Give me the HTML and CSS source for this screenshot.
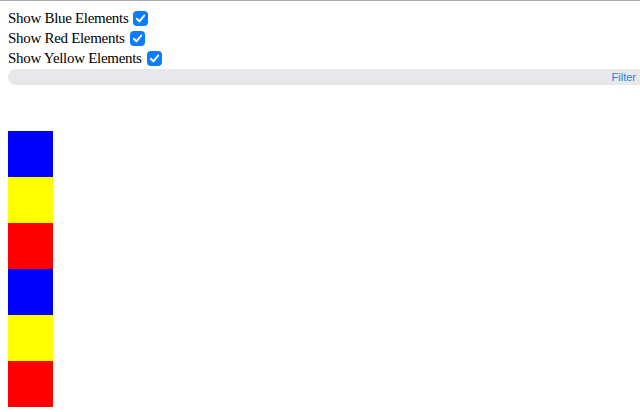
FILE: index.html
```html
<!DOCTYPE html>
<html lang="en">
<head>
    <meta charset="UTF-8">
    <meta name="viewport" content="width=device-width, initial-scale=1.0">
    <title>Color Filter</title>
    <link rel="stylesheet" href="styles.css">
</head>
<body>
    <!-- Filter options -->
    <div class="options">
        <label class="option">Show Blue Elements
            <span class="check"><svg viewBox="0 0 15 15" width="15" height="15"><rect width="15" height="15" rx="4" fill="#0b7cff"/><path d="M3.8 7.8 L6.4 10.3 L11.2 4.6" fill="none" stroke="#fff" stroke-width="1.9" stroke-linecap="round" stroke-linejoin="round"/></svg></span>
        </label>
        <label class="option">Show Red Elements
            <span class="check"><svg viewBox="0 0 15 15" width="15" height="15"><rect width="15" height="15" rx="4" fill="#0b7cff"/><path d="M3.8 7.8 L6.4 10.3 L11.2 4.6" fill="none" stroke="#fff" stroke-width="1.9" stroke-linecap="round" stroke-linejoin="round"/></svg></span>
        </label>
        <label class="option">Show Yellow Elements
            <span class="check"><svg viewBox="0 0 15 15" width="15" height="15"><rect width="15" height="15" rx="4" fill="#0b7cff"/><path d="M3.8 7.8 L6.4 10.3 L11.2 4.6" fill="none" stroke="#fff" stroke-width="1.9" stroke-linecap="round" stroke-linejoin="round"/></svg></span>
        </label>
    </div>

    <div class="filter-bar">
        <span class="filter-label">Filter</span>
    </div>

    <!-- Elements -->
    <div class="elements">
        <div class="box blue"></div>
        <div class="box yellow"></div>
        <div class="box red"></div>
        <div class="box blue"></div>
        <div class="box yellow"></div>
        <div class="box red"></div>
    </div>
</body>
</html>
```

FILE: styles.css
```css
html {
    border-top: 1px solid #a9a9a9;
}

body {
    margin: 7px 0 0 8px;
    font-family: "Liberation Serif", "Times New Roman", serif;
    font-size: 15px;
    letter-spacing: -0.3px;
    color: #000;
}

.options {
    display: flex;
    flex-direction: column;
}

.option {
    display: flex;
    align-items: center;
    gap: 5px;
    height: 20px;
    line-height: 20px;
}

.check {
    display: inline-flex;
    width: 15px;
    height: 15px;
    margin-top: 1px;
}

.filter-bar {
    display: flex;
    justify-content: flex-end;
    align-items: center;
    margin-top: 1px;
    height: 16px;
    padding-right: 4px;
    border-radius: 8px 0 0 8px;
    background-color: #e8e8eb;
}

.filter-label {
    color: #2a7fdc;
    font-family: "Liberation Sans", Arial, sans-serif;
    font-size: 11px;
    letter-spacing: 0;
}

.elements {
    display: flex;
    flex-direction: column;
    margin: 46px 0 0 -1px;
}

.box {
    width: 46px;
    height: 46px;
}

.blue {
    background-color: #0000ff;
}

.yellow {
    background-color: #ffff00;
}

.red {
    background-color: #ff0000;
}
```
